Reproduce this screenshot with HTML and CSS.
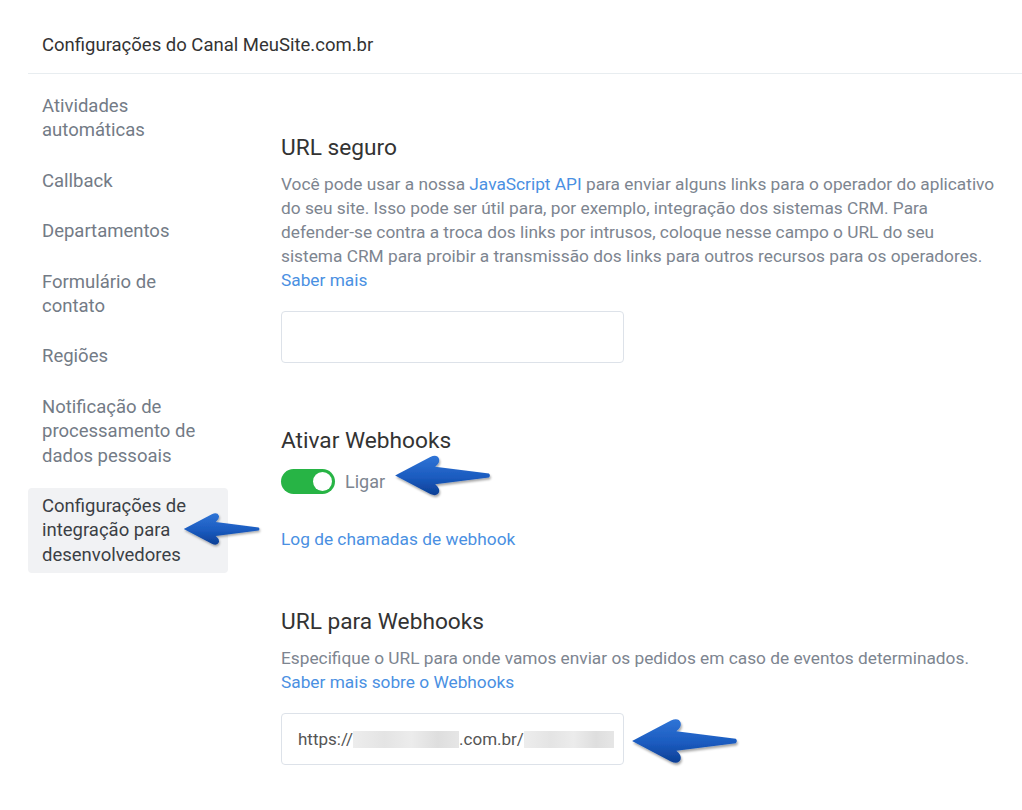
FILE: index.html
```html
<!doctype html>
<html>
	<head>
		<meta charset="utf-8">
		<title>Configurações do Canal</title>
		<link rel="stylesheet" href="styles.css">
	</head>
	<body>
		<div class="page">
			<div class="header">Configurações do Canal MeuSite.com.br</div>
			<div class="layout">
				<ul class="sidebar">
					<li>Atividades automáticas</li>
					<li>Callback</li>
					<li>Departamentos</li>
					<li>Formulário de contato</li>
					<li>Regiões</li>
					<li>Notificação de processamento de dados pessoais</li>
					<li class="active">Configurações de integração para desenvolvedores</li>
				</ul>
				<div class="content">
					<h3>URL seguro</h3>
					<p class="hint">Você pode usar a nossa <a href="#">JavaScript API</a> para enviar alguns links para o operador do aplicativo do seu site. Isso pode ser útil para, por exemplo, integração dos sistemas CRM. Para <span class="nowrap">defender-se</span> contra a troca dos links por intrusos, coloque nesse campo o URL do seu sistema CRM para proibir a transmissão dos links para outros recursos para os operadores.<br><a href="#">Saber mais</a></p>
					<div class="field"></div>

					<h3 class="section">Ativar Webhooks</h3>
					<div class="switch-row">
						<span class="switch"><span class="knob"></span></span>
						<span class="switch-label">Ligar</span>
					</div>
					<a class="log-link" href="#">Log de chamadas de webhook</a>

					<h3 class="section2">URL para Webhooks</h3>
					<p class="hint">Especifique o URL para onde vamos enviar os pedidos em caso de eventos determinados.<br><a href="#">Saber mais sobre o Webhooks</a></p>
					<div class="field url">https://<span class="blur b1"></span>.com.br/<span class="blur b2"></span></div>
				</div>
			</div>
		</div>

		<!-- annotation arrows -->
		<svg class="arrow arrow-menu" viewBox="0 0 100 44"><use href="#arr"/></svg>
		<svg class="arrow arrow-switch" viewBox="0 0 100 44"><use href="#arr"/></svg>
		<svg class="arrow arrow-url" viewBox="0 0 100 44"><use href="#arr"/></svg>

		<svg width="0" height="0" class="defs">
			<defs>
				<linearGradient id="blue" x1="0" y1="0" x2="0" y2="1">
					<stop offset="0" stop-color="#2f74d6"/>
					<stop offset="0.55" stop-color="#1b5bbf"/>
					<stop offset="1" stop-color="#0c3f95"/>
				</linearGradient>
				<filter id="shadow" x="-10%" y="-20%" width="130%" height="150%">
					<feDropShadow dx="1" dy="2" stdDeviation="1.2" flood-color="#000" flood-opacity="0.35"/>
				</filter>
				<path id="arr" fill="url(#blue)" filter="url(#shadow)" d="M1,22 L37,3 Q44,0 46,5 Q47,9 42,13 L97,20 Q99,22 97,24 L42,31 Q47,35 46,39 Q44,44 37,41 Z"/>
			</defs>
		</svg>
	</body>
</html>
```

FILE: styles.css
```css
body {
	margin: 0;
	font-family: Roboto, "Liberation Sans", sans-serif;
	color: #333;
	background: #fff;
}

.page {
	margin-left: 28px;
}

.header {
	height: 74px;
	box-sizing: border-box;
	padding: 33px 14px 0;
	font-size: 18.5px;
	line-height: 24px;
	color: #333;
	border-bottom: 1px solid #e8edf0;
}

.layout {
	display: flex;
	align-items: flex-start;
}

.sidebar {
	list-style: none;
	margin: 14px 0 0;
	padding: 0;
	width: 200px;
	flex: none;
}

.sidebar li {
	padding: 6px 14px;
	margin-bottom: 14px;
	font-size: 18.5px;
	line-height: 24.4px;
	color: #737b86;
	border-radius: 4px;
}

.sidebar li.active {
	background-color: #f1f2f4;
	color: #3b3f45;
}

.content {
	margin-left: 53px;
	padding-top: 60px;
	width: 716px;
}

h3 {
	margin: 0;
	font-size: 22.7px;
	font-weight: normal;
	line-height: 28px;
	color: #333;
}

.hint {
	margin: 10px 0 19px;
	font-size: 17.3px;
	line-height: 24px;
	color: #7d8590;
}

.nowrap {
	white-space: nowrap;
}

a {
	color: #4a90e2;
	text-decoration: none;
}

.field {
	width: 343px;
	height: 52px;
	box-sizing: border-box;
	border: 1px solid #dde2e9;
	border-radius: 4px;
}

.section {
	margin-top: 64px;
}

.switch-row {
	display: flex;
	align-items: center;
	margin-top: 14px;
	height: 25px;
}

.switch {
	display: inline-flex;
	justify-content: flex-end;
	align-items: center;
	width: 54px;
	height: 25px;
	box-sizing: border-box;
	padding-right: 3px;
	border-radius: 13px;
	background-color: #27b445;
}

.knob {
	width: 19px;
	height: 19px;
	border-radius: 50%;
	background: #fff;
}

.switch-label {
	margin-left: 10px;
	font-size: 18px;
	color: #7d8590;
}

.log-link {
	display: block;
	margin-top: 33px;
	font-size: 17.3px;
	line-height: 24px;
}

.section2 {
	margin-top: 57px;
}

.section2 + .hint {
	margin-top: 10px;
	margin-bottom: 19px;
}

.field.url {
	display: flex;
	align-items: center;
	padding-left: 16px;
	font-size: 17px;
	color: #555;
}

.blur {
	display: inline-block;
	height: 17px;
	background: linear-gradient(90deg, #ededed 0, #e4e4e4 30%, #ececec 55%, #dedede 80%, #e6e6e6 100%);
}

.b1 {
	width: 106px;
}

.b2 {
	width: 90px;
}

.defs {
	position: absolute;
}

.arrow {
	position: absolute;
	overflow: visible;
}

.arrow-menu {
	left: 183px;
	top: 511px;
	width: 78px;
	height: 36px;
}

.arrow-switch {
	left: 394px;
	top: 454px;
	width: 98px;
	height: 43px;
}

.arrow-url {
	left: 631px;
	top: 716px;
	width: 108px;
	height: 50px;
}
```
